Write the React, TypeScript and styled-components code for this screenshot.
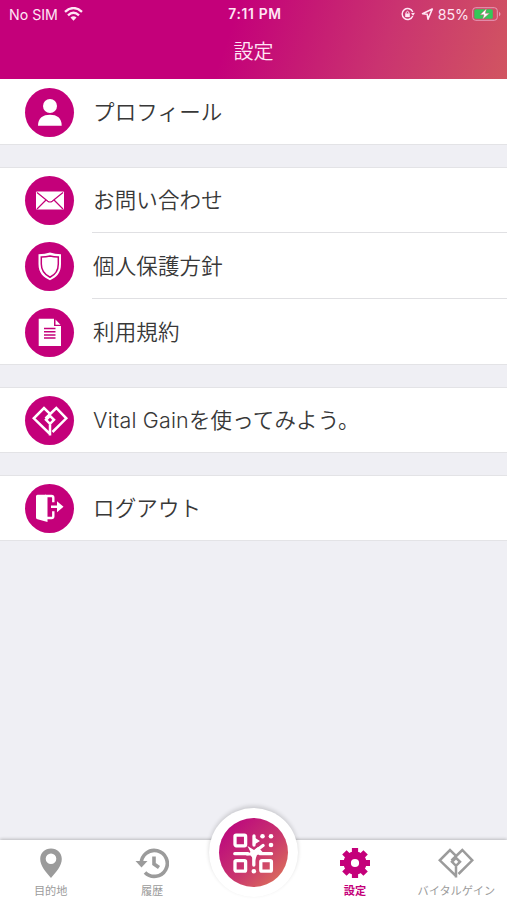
import React from "react";
import styled, { createGlobalStyle, css } from "styled-components";

const Global = createGlobalStyle`
  * { box-sizing: border-box; }
  body { margin: 0; background: #efeff4; }
`;

const magenta = "#c4007a";
const grey = "#9b9b9b";

const Screen = styled.div`
  width: 507px;
  height: 900px;
  display: flex;
  flex-direction: column;
  overflow: hidden;
  background: #efeff4;
  color: #383838;
  font-family: Inter, "Noto Sans CJK JP", sans-serif;
`;

const Header = styled.header`
  height: 79px;
  flex: none;
  color: #ffe6f5;
  background: linear-gradient(108deg, ${magenta} 45%, #c61a74 60%, #ca3370 75%, #d15561 100%);
`;

const StatusBar = styled.div`
  height: 27px;
  display: grid;
  grid-template-columns: 1fr auto 1fr;
  align-items: center;
  padding: 0 6px 0 9px;
  font-size: 14.2px;
  line-height: 27px;
`;

const StatusGroup = styled.div<{ $end?: boolean }>`
  display: flex;
  align-items: center;
  justify-content: ${(p) => (p.$end ? "flex-end" : "flex-start")};
  gap: ${(p) => (p.$end ? "3px" : "6px")};
`;

const Clock = styled.span`
  font-size: 13.8px;
  font-weight: 600;
  letter-spacing: 0.7px;
  padding-top: 1px;
`;

const Title = styled.h1`
  margin: 0;
  height: 50px;
  line-height: 51px;
  text-align: center;
  font-size: 20px;
  font-weight: 350;
`;

const List = styled.main`
  flex: 1;
  display: flex;
  flex-direction: column;
  gap: 22px;
`;

const Group = styled.section<{ $first?: boolean }>`
  background: #fff;
  box-shadow: inset 0 -1px #e3e3e6${(p) => (p.$first ? "" : ", inset 0 1px #e3e3e6")};
`;

const Row = styled.div`
  display: flex;
  align-items: center;
  height: 66px;
  padding-left: 25px;
  gap: 18px;
`;

const Label = styled.span<{ $divided?: boolean }>`
  flex: 1;
  align-self: stretch;
  display: flex;
  align-items: center;
  padding: 0 0 3px 1px;
  font-size: 21.5px;
  font-weight: 350;
  letter-spacing: 0.15px;
  white-space: nowrap;
  ${(p) => p.$divided && css`box-shadow: inset 0 -1px #e0e0e3;`}
`;

const Disc = styled.svg`
  width: 49px;
  height: 49px;
  flex: none;
  border-radius: 50%;
  background: ${magenta};
  color: #fff;
`;

const TabBar = styled.nav`
  height: 60px;
  flex: none;
  display: grid;
  grid-template-columns: repeat(5, 1fr);
  background: #fff;
  box-shadow: 0 -1px 3px rgba(0, 0, 0, 0.22);
`;

const Tab = styled.div<{ $active?: boolean }>`
  display: flex;
  flex-direction: column;
  align-items: center;
  color: ${(p) => (p.$active ? magenta : grey)};
  padding-top: 7px;
  font-size: 11.2px;
  line-height: 16px;
  font-weight: ${(p) => (p.$active ? 700 : 400)};
  white-space: nowrap;
  gap: 4px;
`;

const ScanTab = styled.div`
  display: flex;
  justify-content: center;
`;

const ScanButton = styled.div`
  width: 89px;
  height: 89px;
  flex: none;
  margin-top: -32px;
  border-radius: 50%;
  background: #fff;
  display: flex;
  align-items: center;
  justify-content: center;
  box-shadow: 0 -2px 4px rgba(0, 0, 0, 0.16);
`;

const ScanDisc = styled.div`
  width: 69px;
  height: 69px;
  border-radius: 50%;
  display: flex;
  align-items: center;
  justify-content: center;
  background: linear-gradient(135deg, #bd0c7c 15%, #c9356e 55%, #dd7558 95%);
`;

const Heart = () => (
  <g fill="none" stroke="currentColor" strokeWidth="2.5">
    <path d="M25 39.5V28.5M25 38L8.8 22.3L19 12L24.5 17.3" />
    <path d="M27.5 36L41.3 22.3L31.3 12L20.5 22.5" />
    <path d="M25 19.8L29 23.8L25 27.8L21 23.8Z" />
  </g>
);

const icons = {
  profile: (
    <g fill="currentColor">
      <circle cx="25" cy="18" r="7" />
      <path d="M13 37.8C13 30 18 26.8 25 26.8S36.7 30 36.7 37.8Z" />
    </g>
  ),
  mail: (
    <>
      <rect x="11" y="15.6" width="28" height="18" rx="1" fill="currentColor" />
      <path d="M12 16.5L22.8 25.2Q25 26.8 27.2 25.2L38 16.5M12 33L21 24M38 33L29 24" fill="none" stroke={magenta} strokeWidth="1.2" />
    </>
  ),
  shield: (
    <>
      <path d="M25 10.6Q30 12.2 36 12.2V22C36 31 31.5 35.5 25 38.2C18.5 35.5 13.5 31 13.5 22V12.2Q20 12.2 25 10.6Z" fill="currentColor" />
      <path d="M25 14Q29 15 33.3 15V22C33.3 29 30 32.8 25 35.2C20 32.8 16.3 29 16.3 22V15Q21 15 25 14Z" fill="none" stroke={magenta} strokeWidth="1.5" />
    </>
  ),
  terms: (
    <>
      <path d="M13.7 10.8H29V18H36V38H13.7Z M30.5 11.5L35.5 16.7H30.5Z" fill="currentColor" />
      <path d="M19 20.5H30.5M19 23.7H30.5M19 26.9H30.5M19 30.1H30.5" stroke={magenta} strokeWidth="1.5" />
    </>
  ),
  heart: <Heart />,
  logout: (
    <>
      <path d="M12.5 10.8H21L22.5 13V38L12.5 35.3Q11 35 11 33.5V12.3Q11 10.8 12.5 10.8Z" fill="currentColor" />
      <path d="M20 12H26.5Q28.3 12 28.3 13.8V18.3M22 34H26.5Q28.3 34 28.3 32.2V27.3M26 22.8H34" fill="none" stroke="currentColor" strokeWidth="2.4" />
      <path d="M32 17.3L38.5 22.8L32 28.3Z" fill="currentColor" />
    </>
  ),
};

type IconName = keyof typeof icons;
const groups: { icon: IconName; text: string }[][] = [
  [{ icon: "profile", text: "プロフィール" }],
  [
    { icon: "mail", text: "お問い合わせ" },
    { icon: "shield", text: "個人保護方針" },
    { icon: "terms", text: "利用規約" },
  ],
  [{ icon: "heart", text: "Vital Gainを使ってみよう。" }],
  [{ icon: "logout", text: "ログアウト" }],
];

const Wifi = () => (
  <svg width="19" height="14" viewBox="0 0 19 14" fill="none" stroke="currentColor" strokeWidth="2.4">
    <path d="M1 4.8Q9.5 -2.6 18 4.8M4 8.3Q9.5 3.4 15 8.3" />
    <path d="M6.5 10.6Q9.5 8 12.5 10.6L9.5 13.8Z" fill="currentColor" stroke="none" />
  </svg>
);

const StatusIcons = () => (
  <svg width="34" height="14" viewBox="0 0 34 14" fill="none" stroke="currentColor">
    <path d="M11.8 5A5.5 5.5 0 1 0 11.8 9" strokeWidth="1.4" />
    <path d="M10 6.2L14 5.8L12.2 8.8Z" fill="currentColor" stroke="none" />
    <rect x="4.2" y="6.5" width="4.6" height="3.6" fill="currentColor" stroke="none" />
    <path d="M5 6.8V5.5Q6.5 3 8 5.5V6.8" strokeWidth="1" />
    <path d="M21.5 6.7L31.3 2L27 12.2L26.2 7.3Z" strokeWidth="1.6" strokeLinejoin="round" />
  </svg>
);

const Battery = () => (
  <svg width="29" height="14" viewBox="0 0 29 14">
    <rect x="0.7" y="0.7" width="24.6" height="12.6" rx="3" fill="none" stroke="#e79bb9" />
    <path d="M27 4.7Q30 7 27 9.3Z" fill="#e79bb9" />
    <rect x="2.3" y="2.3" width="18.5" height="9.4" rx="1.5" fill="#35c759" />
    <path d="M14.5 1.5L8 7.8H12L10.5 12.5L17.5 6.3H13.4Z" fill="#fff" stroke="#c94d6f" strokeWidth="0.5" />
  </svg>
);

const QrGlyph = () => (
  <svg width="42" height="42" viewBox="0 0 42 42" fill="none" stroke="#fff" strokeWidth="3.3" strokeLinecap="round">
    <rect x="3" y="3.2" width="10.6" height="10.6" rx="1.2" />
    <rect x="3" y="28.6" width="10.6" height="10.6" rx="1.2" />
    <rect x="28.8" y="28.6" width="10.6" height="10.6" rx="1.2" />
    <path d="M2.8 21.7H16M22 4V13M28 21.7H39.5M21.8 24V33M25 18L31 13.5" />
    <path d="M21 4.5L28 9L21 13.5ZM15.5 14L22 18L26 15L31.5 21L25 23L23 28.5L18.5 23.5H14L18.5 20Z" fill="#fff" stroke="none" />
    <g fill="#fff" stroke="none">
      <circle cx="30.5" cy="4.2" r="2.3" />
      <circle cx="39" cy="4.2" r="2.3" />
      <circle cx="39" cy="13" r="2.3" />
      <circle cx="21.8" cy="39.2" r="2.3" />
    </g>
  </svg>
);

export default function App() {
  return (
    <Screen>
      <Global />
      <Header>
        <StatusBar>
          <StatusGroup><span>No SIM</span><Wifi /></StatusGroup>
          <Clock>7:11 PM</Clock>
          <StatusGroup $end><StatusIcons /><span>85%</span><Battery /></StatusGroup>
        </StatusBar>
        <Title>設定</Title>
      </Header>
      <List>
        {groups.map((rows, g) => (
          <Group key={g} $first={g === 0}>
            {rows.map((row, i) => (
              <Row key={row.icon}>
                <Disc viewBox="0 0 49 49">{icons[row.icon]}</Disc>
                <Label $divided={i < rows.length - 1}>{row.text}</Label>
              </Row>
            ))}
          </Group>
        ))}
      </List>
      <TabBar>
        <Tab>
          <svg width="32" height="32" viewBox="0 0 32 32">
            <path fill="currentColor" fillRule="evenodd" d="M16 1.5C9.8 1.5 5.2 6 5.2 12C5.2 19 11 25 16 31C21 25 26.8 19 26.8 12C26.8 6 22.2 1.5 16 1.5ZM16 6.5A5.3 5.3 0 1 1 16 17.1A5.3 5.3 0 1 1 16 6.5Z" />
          </svg>
          目的地
        </Tab>
        <Tab>
          <svg width="34" height="32" viewBox="0 0 34 32" fill="none" stroke="currentColor">
            <path d="M6.3 17A13 13 0 1 1 10 25.5" strokeWidth="3.6" />
            <path d="M0.5 14H12.5L6.5 20.5Z" fill="currentColor" stroke="none" />
            <path d="M19 9.5V17L24 20.5" strokeWidth="3.6" />
          </svg>
          履歴
        </Tab>
        <ScanTab><ScanButton><ScanDisc><QrGlyph /></ScanDisc></ScanButton></ScanTab>
        <Tab $active>
          <svg width="32" height="32" viewBox="0 0 32 32">
            <g stroke="currentColor" strokeWidth="6.2">
              <path d="M16 1V8M16 24V31M1 16H8M24 16H31M5.4 5.4L10.5 10.5M21.5 21.5L26.6 26.6M5.4 26.6L10.5 21.5M21.5 10.5L26.6 5.4" />
            </g>
            <circle cx="16" cy="16" r="7.8" fill="none" stroke="currentColor" strokeWidth="7.4" />
          </svg>
          設定
        </Tab>
        <Tab>
          <svg width="36" height="32" viewBox="7 9.5 36 31"><Heart /></svg>
          バイタルゲイン
        </Tab>
      </TabBar>
    </Screen>
  );
}
